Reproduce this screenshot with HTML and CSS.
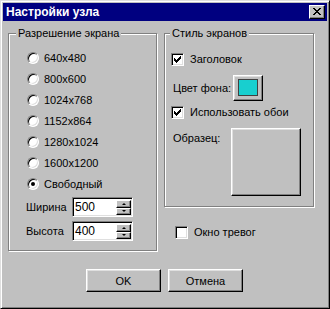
FILE: index.html
```html
<!DOCTYPE html>
<html lang="ru">
<head>
<meta charset="utf-8">
<title>Настройки узла</title>
<link rel="stylesheet" href="styles.css">
</head>
<body>
<div class="window">
  <div class="titlebar">
    <span class="title">Настройки узла</span>
    <span class="close"><svg width="8" height="7" viewBox="0 0 8 7" shape-rendering="crispEdges"><path d="M0 0h2v1h-2zM6 0h2v1h-2zM1 1h2v1h-2zM5 1h2v1h-2zM2 2h4v1h-4zM3 3h2v1h-2zM2 4h4v1h-4zM1 5h2v1h-2zM5 5h2v1h-2zM0 6h2v1h-2zM6 6h2v1h-2z" fill="#000"/></svg></span>
  </div>
  <div class="content">
    <div class="columns">
      <div class="group group-left">
        <span class="legend">Разрешение экрана</span>
        <div class="radio-row"><span class="radio"></span><span>640x480</span></div>
        <div class="radio-row"><span class="radio"></span><span>800x600</span></div>
        <div class="radio-row"><span class="radio"></span><span>1024x768</span></div>
        <div class="radio-row"><span class="radio"></span><span>1152x864</span></div>
        <div class="radio-row"><span class="radio"></span><span>1280x1024</span></div>
        <div class="radio-row"><span class="radio"></span><span>1600x1200</span></div>
        <div class="radio-row"><span class="radio checked"></span><span>Свободный</span></div>
        <div class="field-row first"><span class="field-label">Ширина</span>
          <div class="spin"><span class="spin-value">500</span><div class="spin-btns"><span class="spin-btn"><span class="arrow-up"></span></span><span class="spin-btn"><span class="arrow-down"></span></span></div></div>
        </div>
        <div class="field-row"><span class="field-label">Высота</span>
          <div class="spin"><span class="spin-value">400</span><div class="spin-btns"><span class="spin-btn"><span class="arrow-up"></span></span><span class="spin-btn"><span class="arrow-down"></span></span></div></div>
        </div>
      </div>
      <div class="right-col">
        <div class="group group-right">
          <span class="legend">Стиль экранов</span>
          <div class="check-row row-title"><span class="check"><svg width="7" height="7" viewBox="0 0 7 7" shape-rendering="crispEdges"><path d="M6 0h1v1h-1zM5 1h2v1h-2zM0 2h1v1h-1zM4 2h3v1h-3zM0 3h2v1h-2zM3 3h3v1h-3zM0 4h5v1h-5zM1 5h3v1h-3zM2 6h1v1h-1z" fill="#000"/></svg></span><span>Заголовок</span></div>
          <div class="color-row"><span class="color-label">Цвет фона:</span><span class="color-btn"><span class="swatch"></span></span></div>
          <div class="check-row row-wall"><span class="check"><svg width="7" height="7" viewBox="0 0 7 7" shape-rendering="crispEdges"><path d="M6 0h1v1h-1zM5 1h2v1h-2zM0 2h1v1h-1zM4 2h3v1h-3zM0 3h2v1h-2zM3 3h3v1h-3zM0 4h5v1h-5zM1 5h3v1h-3zM2 6h1v1h-1z" fill="#000"/></svg></span><span>Использовать обои</span></div>
          <div class="sample-row"><span class="sample-label">Образец:</span><span class="sample"></span></div>
        </div>
        <div class="check-row row-alarm"><span class="check"></span><span>Окно тревог</span></div>
      </div>
    </div>
    <div class="buttons">
      <button class="btn" type="button">OK</button>
      <button class="btn" type="button">Отмена</button>
    </div>
  </div>
</div>
</body>
</html>
```
FILE: styles.css
```css
html, body {
  margin: 0;
  padding: 0;
  background: #c0c0c0;
}
body {
  font-family: "Liberation Sans", Arial, sans-serif;
  font-size: 11px;
  color: #000;
}
.window {
  width: 330px;
  height: 309px;
  box-sizing: border-box;
  background: #c0c0c0;
  border: 1px solid;
  border-color: #dfdfdf #000 #000 #dfdfdf;
  box-shadow: inset 1px 1px #fff, inset -1px -1px #808080;
  padding: 2px;
}
.titlebar {
  height: 18px;
  background: #000080;
  display: flex;
  align-items: center;
  justify-content: space-between;
  padding: 0 2px 0 3px;
}
.title {
  color: #fff;
  font-weight: bold;
  font-size: 12px;
}
.close {
  width: 16px;
  height: 14px;
  box-sizing: border-box;
  background: #c0c0c0;
  border: 1px solid;
  border-color: #fff #000 #000 #fff;
  box-shadow: inset -1px -1px #808080;
  display: flex;
  align-items: center;
  justify-content: center;
  padding: 0 1px 1px 0;
}
.close svg { display: block; }
.content {
  padding: 12px 0 0 5px;
}
.columns {
  display: flex;
  gap: 7px;
  align-items: flex-start;
}
.group {
  position: relative;
  box-sizing: border-box;
  border: 1px solid #808080;
  box-shadow: inset 1px 1px #fff, 1px 1px #fff;
}
.legend {
  position: absolute;
  top: -8px;
  background: #c0c0c0;
  padding: 0 2px;
  line-height: 14px;
  white-space: nowrap;
}
.group-left {
  width: 149px;
  height: 218px;
  padding: 13px 0 0 18px;
}
.group-left .legend { left: 7px; }
.radio-row {
  height: 21px;
  display: flex;
  align-items: center;
  gap: 5px;
}
.radio {
  width: 12px;
  height: 12px;
  box-sizing: border-box;
  border-radius: 50%;
  background: #fff;
  border: 1px solid;
  border-color: #808080 #fff #fff #808080;
  box-shadow: inset 1px 1px #000, inset -1px -1px #dfdfdf;
  display: flex;
  align-items: center;
  justify-content: center;
}
.radio.checked::after {
  content: "";
  width: 4px;
  height: 4px;
  border-radius: 50%;
  background: #000;
}
.field-row {
  display: flex;
  align-items: center;
  margin-top: 4px;
  margin-left: -1px;
}
.field-row.first { margin-top: 3px; }
.field-label {
  width: 46px;
}
.spin {
  width: 61px;
  height: 20px;
  box-sizing: border-box;
  display: flex;
  background: #fff;
  border: 1px solid;
  border-color: #808080 #fff #fff #808080;
  box-shadow: inset 1px 1px #000, inset -1px -1px #dfdfdf;
  padding: 2px 1px 1px 2px;
}
.spin-value {
  flex: 1;
  line-height: 15px;
  font-size: 12px;
}
.spin-btns {
  width: 15px;
  display: flex;
  flex-direction: column;
}
.spin-btn {
  flex: 1;
  box-sizing: border-box;
  background: #c0c0c0;
  border: 1px solid;
  border-color: #fff #000 #000 #fff;
  box-shadow: inset -1px -1px #808080;
  display: flex;
  align-items: center;
  justify-content: center;
}
.arrow-up {
  width: 0;
  height: 0;
  border-left: 2px solid transparent;
  border-right: 2px solid transparent;
  border-bottom: 2px solid #000;
}
.arrow-down {
  width: 0;
  height: 0;
  border-left: 2px solid transparent;
  border-right: 2px solid transparent;
  border-top: 2px solid #000;
}
.right-col {
  display: flex;
  flex-direction: column;
}
.group-right {
  width: 150px;
  height: 174px;
  padding: 17px 0 0 6px;
}
.group-right .legend { left: 5px; }
.check-row {
  display: flex;
  align-items: center;
  gap: 6px;
  height: 16px;
}
.check {
  width: 13px;
  height: 13px;
  box-sizing: border-box;
  background: #fff;
  border: 1px solid;
  border-color: #808080 #fff #fff #808080;
  box-shadow: inset 1px 1px #000, inset -1px -1px #dfdfdf;
  padding: 2px;
}
.check svg { display: block; }
.color-row {
  display: flex;
  align-items: center;
  height: 26px;
  margin-top: 8px;
  padding-left: 2px;
}
.color-label { width: 60px; }
.color-btn {
  width: 30px;
  height: 26px;
  box-sizing: border-box;
  border: 1px solid;
  border-color: #fff #000 #000 #fff;
  box-shadow: inset -1px -1px #808080, inset 1px 1px #dfdfdf;
  padding: 3px 4px 4px 4px;
  display: flex;
}
.swatch {
  flex: 1;
  background: #18cfcf;
  border: 1px solid #404040;
}
.row-wall { margin-top: 3px; }
.sample-row {
  display: flex;
  margin-top: 8px;
  padding-left: 2px;
}
.sample-label {
  width: 58px;
  padding-top: 4px;
}
.sample {
  width: 70px;
  height: 68px;
  box-sizing: border-box;
  border: 1px solid;
  border-color: #fff #000 #000 #fff;
  box-shadow: inset -1px -1px #808080, inset 1px 1px #dfdfdf;
}
.row-alarm {
  margin-top: 17px;
  padding-left: 11px;
  gap: 6px;
}
.buttons {
  display: flex;
  gap: 7px;
  margin-top: 18px;
  padding-left: 78px;
}
.btn {
  width: 75px;
  height: 23px;
  box-sizing: border-box;
  margin: 0;
  padding: 0;
  font-family: "Liberation Sans", Arial, sans-serif;
  font-size: 11px;
  color: #000;
  background: #c0c0c0;
  border: 1px solid;
  border-color: #fff #000 #000 #fff;
  box-shadow: inset -1px -1px #808080, inset 1px 1px #dfdfdf;
}
```
